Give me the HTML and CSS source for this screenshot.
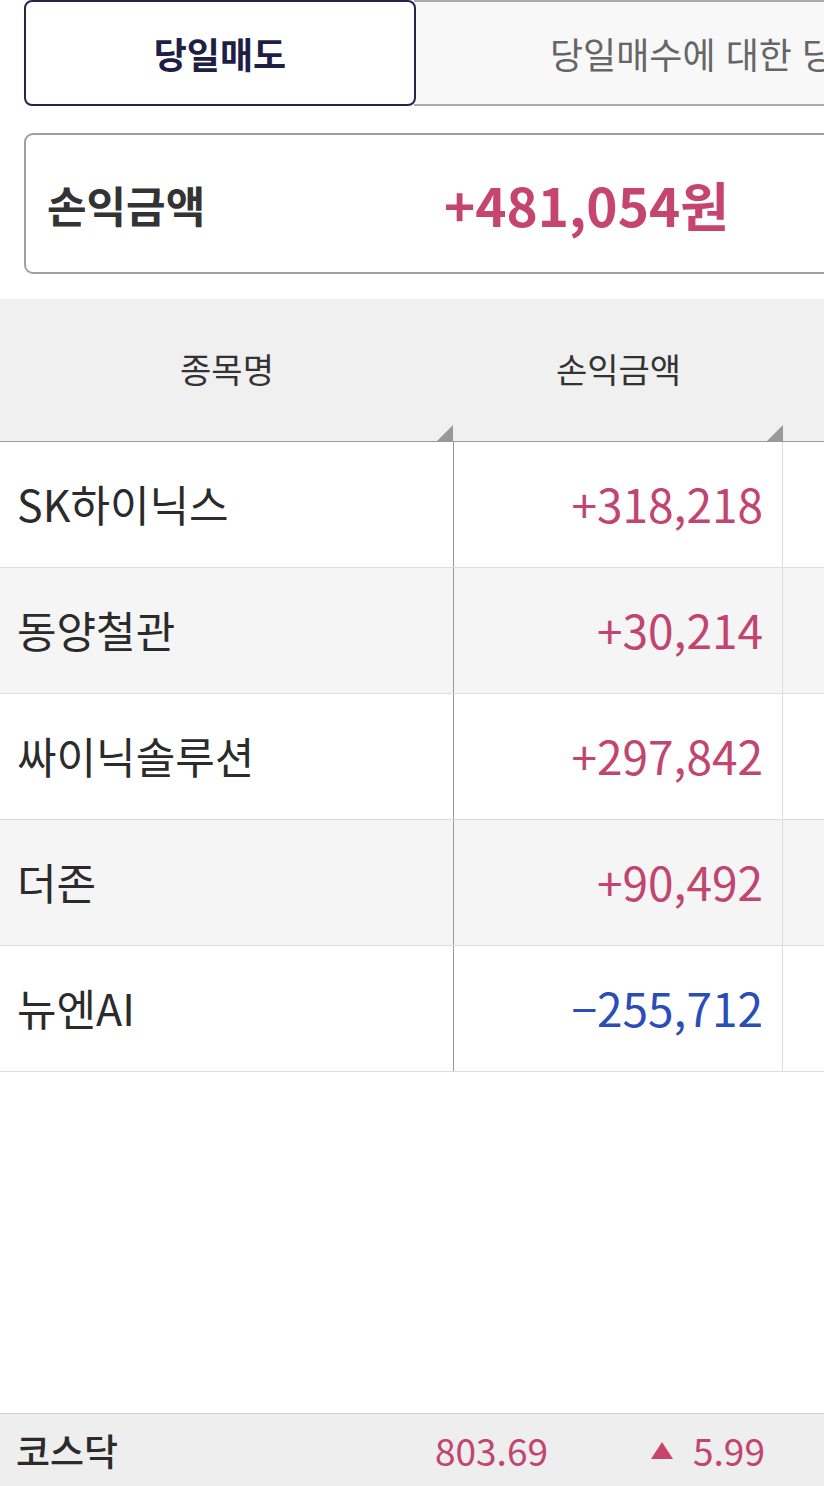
FILE: index.html
```html
<!DOCTYPE html>
<html lang="ko">
<head>
<meta charset="utf-8">
<link rel="stylesheet" href="styles.css">
</head>
<body>
<div class="page">
  <div class="tabs">
    <div class="tab tab-active">당일매도</div>
    <div class="tab tab-other">당일매수에 대한 당일매도</div>
  </div>

  <div class="summary">
    <span class="summary-label">손익금액</span>
    <span class="summary-value">+481,054원</span>
  </div>

  <div class="table">
    <div class="thead">
      <div class="th th-name">종목명<span class="corner"></span></div>
      <div class="th th-amt">손익금액<span class="corner"></span></div>
      <div class="th th-rest"></div>
    </div>
    <div class="row">
      <div class="td td-name">SK하이닉스</div>
      <div class="td td-amt up">+318,218</div>
      <div class="td td-rest"></div>
    </div>
    <div class="row alt">
      <div class="td td-name">동양철관</div>
      <div class="td td-amt up">+30,214</div>
      <div class="td td-rest"></div>
    </div>
    <div class="row">
      <div class="td td-name">싸이닉솔루션</div>
      <div class="td td-amt up">+297,842</div>
      <div class="td td-rest"></div>
    </div>
    <div class="row alt">
      <div class="td td-name">더존</div>
      <div class="td td-amt up">+90,492</div>
      <div class="td td-rest"></div>
    </div>
    <div class="row">
      <div class="td td-name">뉴엔AI</div>
      <div class="td td-amt down">−255,712</div>
      <div class="td td-rest"></div>
    </div>
  </div>

  <div class="footer">
    <span class="idx-name">코스닥</span>
    <span class="idx-value">803.69</span>
    <span class="idx-change"><span class="tri"></span>5.99</span>
  </div>
</div>
</body>
</html>
```

FILE: styles.css
```css
* { box-sizing: border-box; }
html, body { margin: 0; padding: 0; }
body {
  background: #fff;
  font-family: "Noto Sans CJK KR", "Noto Sans", sans-serif;
  color: #333;
  overflow: hidden;
}
.page {
  width: 824px;
  min-height: 100vh;
  display: flex;
  flex-direction: column;
  overflow: hidden;
}

/* tabs */
.tabs {
  display: flex;
  padding-left: 24px;
  height: 107px;
  flex-shrink: 0;
}
.tab {
  display: flex;
  align-items: center;
  height: 106px;
  white-space: nowrap;
  flex-shrink: 0;
}
.tab-active {
  width: 392px;
  justify-content: center;
  border: 2px solid #23254d;
  border-radius: 8px;
  font-size: 36px;
  font-weight: 700;
  color: #1e1f45;
  position: relative;
  z-index: 1;
  background: #fff;
}
.tab-other {
  width: 430px;
  overflow: hidden;
  margin-left: -2px;
  background: #f8f8f8;
  border-top: 2px solid #aaa;
  border-bottom: 2px solid #aaa;
  padding-left: 136px;
  font-size: 36px;
  color: #666;
}

/* summary */
.summary {
  margin-top: 26px;
  margin-left: 24px;
  width: 900px;
  height: 141px;
  flex-shrink: 0;
  border: 2px solid #a0a0a0;
  border-radius: 9px;
  display: flex;
  align-items: center;
  padding-left: 21px;
}
.summary-label {
  width: 397px;
  font-size: 43px;
  font-weight: 700;
  color: #333;
}
.summary-value {
  font-size: 53px;
  font-weight: 700;
  color: #c5456f;
}

/* table */
.table {
  margin-top: 25px;
  flex-shrink: 0;
}
.thead, .row {
  display: grid;
  grid-template-columns: 454px 329px 1fr;
}
.thead {
  height: 143px;
  background: #f0f0f0;
  border-bottom: 1px solid #999;
}
.th {
  position: relative;
  display: flex;
  align-items: center;
  justify-content: center;
  font-size: 34px;
  color: #333;
  padding-bottom: 4px;
}
.corner {
  position: absolute;
  right: 0;
  bottom: 0;
  width: 0;
  height: 0;
  border-style: solid;
  border-width: 0 0 16px 16px;
  border-color: transparent transparent #999 transparent;
}
.th-name .corner { right: 1px; }
.row {
  height: 126px;
  background: #fff;
  border-bottom: 1px solid #ddd;
}
.row.alt { background: #f5f5f5; }
.td {
  display: flex;
  align-items: center;
}
.td-name {
  border-right: 1px solid #999;
  padding-left: 17px;
  padding-bottom: 4px;
  font-size: 43px;
  color: #2b2b2b;
}
.td-amt {
  border-right: 1px solid #ddd;
  justify-content: flex-end;
  padding-right: 19px;
  padding-bottom: 4px;
  font-size: 46px;
}
.up { color: #c2456f; }
.down { color: #2b4db6; }

/* footer */
.footer {
  margin-top: auto;
  height: 73px;
  flex-shrink: 0;
  background: #eeeeee;
  border-top: 1px solid #cfcfcf;
  display: flex;
  align-items: center;
  padding-left: 16px;
}
.idx-name {
  width: 419px;
  font-size: 37px;
  font-weight: 500;
  color: #2b2b2b;
}
.idx-value {
  width: 216px;
  font-size: 37px;
  color: #c2456f;
}
.idx-change {
  display: flex;
  align-items: center;
  font-size: 37px;
  color: #c2456f;
}
.tri {
  width: 0;
  height: 0;
  border-style: solid;
  border-width: 0 11px 17px 11px;
  border-color: transparent transparent #c8436d transparent;
  margin-right: 20px;
}
```
